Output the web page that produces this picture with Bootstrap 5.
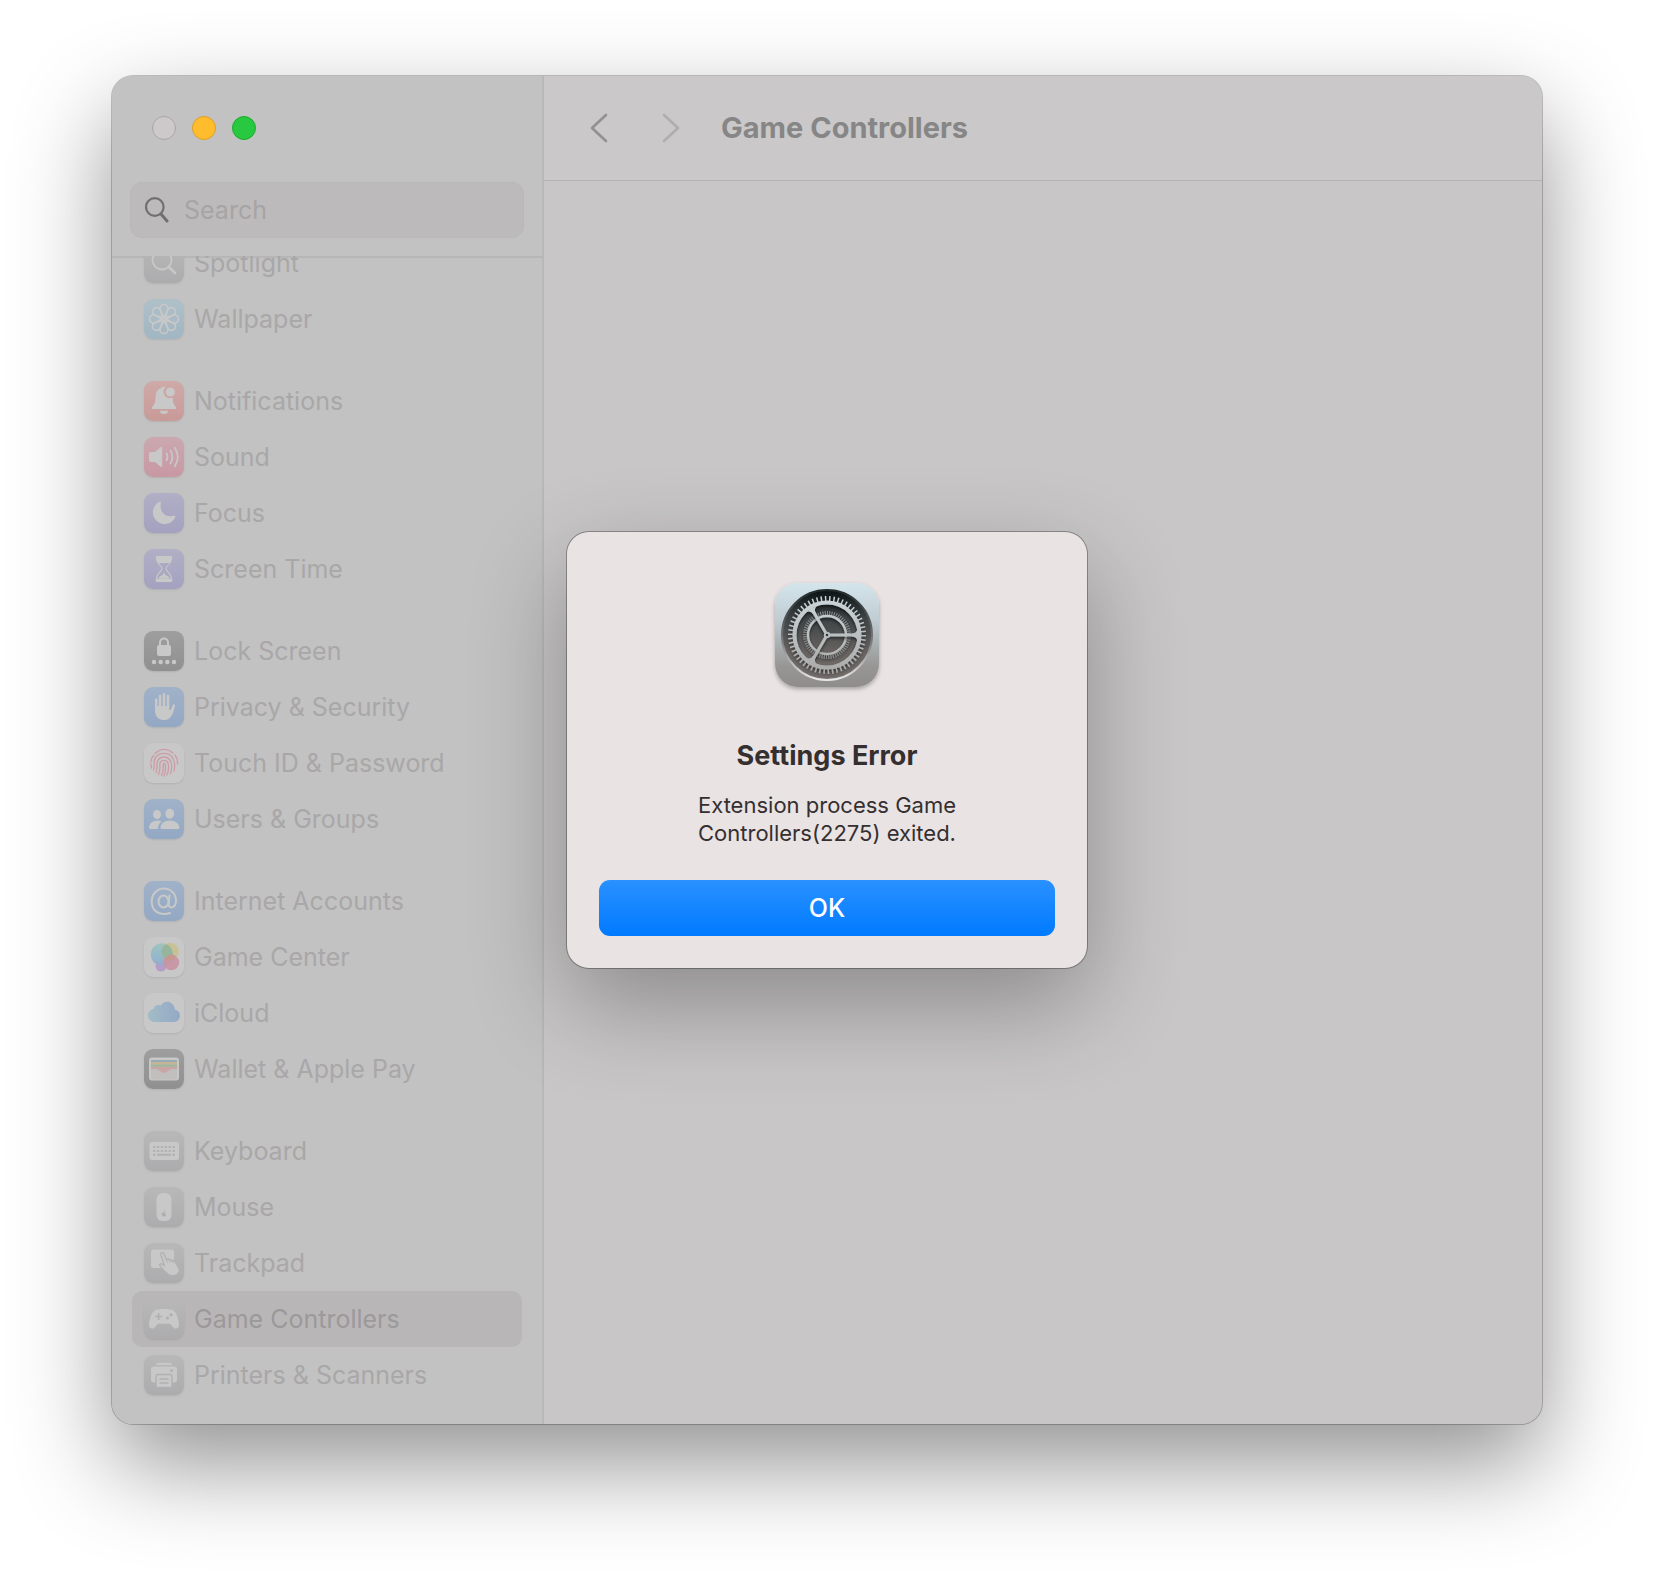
<!DOCTYPE html>
<html lang="en">
<head>
<meta charset="utf-8">
<meta name="viewport" content="width=device-width, initial-scale=1">
<title>Game Controllers</title>
<link href="https://cdn.jsdelivr.net/npm/bootstrap@5.3.0/dist/css/bootstrap.min.css" rel="stylesheet">
<style>
body { font-family: Inter, "Liberation Sans", sans-serif; background: #fff; padding: 76px 112px 148px; }
.app-window { border-radius: 21px; background: #c8c6c7; box-shadow: 0 0 0 1px rgba(0,0,0,.22), 0 40px 96px rgba(0,0,0,.43); }
.app-window > * { min-height: 0; }
.sidebar { width: 432px; background: #c2c2c2; border-right: 2px solid #b9b8b8; border-radius: 21px 0 0 21px; }
.lights { padding: 40px 40px 0; gap: 16px; height: 106px; }
.light { width: 24px; height: 24px; border-radius: 50%; border: 1px solid #aaa7a8; background: #cdc9ca; padding: 0; }
.light-min { background: #ffbd2e; border-color: #dfa023; }
.light-max { background: #28c940; border-color: #1aab2c; }
.search-box { margin: 0 18px 18px; height: 56px; border-radius: 12px; background: #bdbabb; border: 1px solid #b9b7b7; padding: 0 14px; gap: 15px; }
.search-box input { border: 0; background: none; outline: 0; font-size: 25px; line-height: 32px; color: #777; padding: 0; }
.search-box input::placeholder { color: #a6a4a5; opacity: 1; }
.nav-scroll { box-shadow: inset 0 2px #b7b6b6; padding: 0 20px 21px; }
.nav-scroll ul + ul { margin-top: 26px; }
.nav-row { height: 56px; padding: 0 12px; gap: 10px; border-radius: 10px; font-size: 25px; line-height: 32px; color: #a9a7a8; text-decoration: none; }
.nav-row.current { background: #b9b6b7; color: #9b999a; }
.tile { width: 40px; height: 40px; border-radius: 9px; flex: none; box-shadow: 0 1px 2px rgba(0,0,0,.09); color: #c8c8c8; }
.tile svg { display: block; }
.t-gray { background: linear-gradient(#b8b8b8, #acacae); }
.t-cyan { background: linear-gradient(#afc0c8, #a1b6c3); }
.t-red { background: linear-gradient(#cfaaa8, #c89a98); }
.t-pink { background: linear-gradient(#cba8af, #c898a3); }
.t-violet { background: linear-gradient(#b1afc5, #a3a1bf); }
.t-dark { background: linear-gradient(#9e9e9e, #909090); }
.t-blue { background: linear-gradient(#a0b2c8, #93a8c4); }
.t-white { background: #c8c8c8; }
.titlebar { height: 105px; background: #cac8c9; border-bottom: 1px solid #b4b2b3; border-radius: 0 21px 0 0; padding: 0 45px; }
.titlebar button { border: 0; background: none; padding: 0; display: block; }
.titlebar h1 { font-size: 29px; line-height: 36px; font-weight: 700; color: #868686; margin: 0 0 0 40px; }
.alert-box { width: 520px; border-radius: 22px; background: #e9e3e3; padding: 51px 32px 32px; box-shadow: 0 0 0 1px rgba(0,0,0,.3), 0 36px 96px rgba(0,0,0,.3); color: #352f30; }
.alert-box h2 { font-size: 27px; line-height: 32px; font-weight: 700; margin: 53px 0 19px; }
.alert-box p { font-size: 22px; line-height: 28px; margin: 0 50px 33px; }
.btn-ok { height: 56px; border: 0; border-radius: 11px; background: linear-gradient(#2a91ff, #007aff); color: #fff; font-size: 25px; line-height: 32px; font-weight: 500; padding: 0; }
</style>
<script src="https://cdn.jsdelivr.net/npm/bootstrap@5.3.0/dist/js/bootstrap.bundle.min.js"></script>
</head>
<body class="vh-100 d-flex">
<div class="app-window d-flex flex-grow-1 position-relative">
  <aside class="sidebar d-flex flex-column flex-shrink-0">
    <div class="lights d-flex flex-shrink-0">
      <button class="light" type="button" aria-label="Close"></button>
      <button class="light light-min" type="button" aria-label="Minimize"></button>
      <button class="light light-max" type="button" aria-label="Zoom"></button>
    </div>
    <label class="search-box d-flex align-items-center flex-shrink-0">
      <svg class="flex-shrink-0" width="24" height="26" viewBox="0 0 24 26" fill="none" stroke="#717071" stroke-linecap="round"><circle cx="9.800" cy="10" r="8.800" stroke-width="2.200"/><path d="M16 17l6 7" stroke-width="3"/></svg>
      <input class="flex-grow-1 w-100" type="search" placeholder="Search" aria-label="Search">
    </label>
    <nav class="nav-scroll flex-grow-1 d-flex flex-column justify-content-end overflow-hidden" aria-label="Settings">
      <ul class="list-unstyled mb-0">
        <li><a class="nav-row d-flex align-items-center" href="#"><span class="tile t-gray"><svg width="40" height="40" fill="none" stroke="currentColor" stroke-linecap="round"><circle cx="18" cy="17" r="9.500" stroke-width="1.800"/><path d="M25 24l6 6" stroke-width="2.600"/></svg></span>Spotlight</a></li>
        <li><a class="nav-row d-flex align-items-center" href="#"><span class="tile t-cyan"><svg width="40" height="40" fill="none" stroke="currentColor" stroke-width="1.600"><g id="petals"><path id="petal" d="M20 18C18 14 16 12 16 9.500a4 4 0 0 1 8 0C24 12 22 14 20 18z"/><use href="#petal" transform="rotate(45 20 20)"/><use href="#petal" transform="rotate(90 20 20)"/><use href="#petal" transform="rotate(135 20 20)"/></g><use href="#petals" transform="rotate(180 20 20)"/><circle cx="20" cy="20" r="1.800"/></svg></span>Wallpaper</a></li>
      </ul>
      <ul class="list-unstyled mb-0">
        <li><a class="nav-row d-flex align-items-center" href="#"><span class="tile t-red"><svg width="40" height="40" fill="currentColor"><path d="M21.500 6.200A6.300 6.300 0 0 0 26.500 17l2.200-.2c.2 4.700.8 6.500 3 9 .8 1.200.4 2.200-.9 2.200H9.200c-1.300 0-1.700-1-.9-2.200 2.700-3 3-5 3.300-10.300C12 10.500 14 7.800 17.300 7c.6-1 2.500-1.600 4.200-.8zM16 29.700h8a4 3.300 0 0 1-8 0z"/><circle cx="26.300" cy="11" r="4.500"/></svg></span>Notifications</a></li>
        <li><a class="nav-row d-flex align-items-center" href="#"><span class="tile t-pink"><svg width="40" height="40" fill="currentColor"><path d="M5 17c0-1.300.7-2 2-2h4l5.300-4.600c1-.8 1.900-.3 1.900.8v17.600c0 1.200-1 1.600-1.900.8L11 25H7c-1.300 0-2-.7-2-2z"/><path d="M22.500 16.500q2 3.500 0 7M26.500 13.500q3.800 6.500 0 13M30.800 10.800q6 9.200 0 18.400" fill="none" stroke="currentColor" stroke-width="1.700" stroke-linecap="round"/></svg></span>Sound</a></li>
        <li><a class="nav-row d-flex align-items-center" href="#"><span class="tile t-violet"><svg width="40" height="40" fill="currentColor"><path d="M16 8.500c.8-.3 1.200.1 1 .9C14.700 18.500 21 25 30 22.800c1.100-.3 1.700.2 1.300 1.100A11.700 11.700 0 1 1 16 8.500z"/></svg></span>Focus</a></li>
        <li><a class="nav-row d-flex align-items-center" href="#"><span class="tile t-violet"><svg width="40" height="40" fill="currentColor"><path fill-rule="evenodd" d="M13 7h14c1.500 0 1.500 1.500 1 3.500-.8 4.500-5.300 6.500-5.300 9s4.500 4.500 5.300 9.500c.5 2.500.5 4-1 4H13c-1.500 0-1.500-1.500-1-4 .8-5 5.300-7 5.300-9.500s-4.500-4.500-5.300-9C11.500 8.500 11.500 7 13 7zm2 7h10.500c-1.800 2.500-4 3.500-4 5.500 0 3.500 5.200 5 5.200 10.500H13.300c0-5.500 5.200-7 5.200-10.500 0-2-2-3-3.500-5.500z"/><path d="M20 23l1 2.500 4 2.500c1 1 .5 1.800-.5 1.800h-9c-1 0-1.500-.8-.5-1.800l4-2.500z"/></svg></span>Screen Time</a></li>
      </ul>
      <ul class="list-unstyled mb-0">
        <li><a class="nav-row d-flex align-items-center" href="#"><span class="tile t-dark"><svg width="40" height="40" fill="currentColor"><path d="M16 15v-3.500a4 4 0 0 1 8 0V15" fill="none" stroke="currentColor" stroke-width="2"/><rect x="13" y="14" width="14" height="11" rx="2"/><circle cx="10" cy="31" r="2.200"/><circle cx="16.700" cy="31" r="2.200"/><circle cx="23.300" cy="31" r="2.200"/><circle cx="30" cy="31" r="2.200"/></svg></span>Lock Screen</a></li>
        <li><a class="nav-row d-flex align-items-center" href="#"><span class="tile t-blue"><svg width="40" height="40"><path d="M12.200 12.500V23M16 9v11M20 7.200V20M24 9v12" fill="none" stroke="currentColor" stroke-width="2.500" stroke-linecap="round"/><path d="M11 19h14.200v4c1.300.3 2-.8 2.600-2.400l1-2.600c.6-1.400 2.600-.9 2.200.7-1.500 6-2.500 9.300-5 12-3.200 3.200-9.500 3-12.300.1C11.300 28.500 11 25 11 22z" fill="currentColor"/></svg></span>Privacy &amp; Security</a></li>
        <li><a class="nav-row d-flex align-items-center" href="#"><span class="tile t-white"><svg width="40" height="40" fill="none" stroke="#cd9da7" stroke-width="1.400" stroke-linecap="round"><path d="M11 10.500Q20 2.500 29 10M7 19Q7 15 9.500 12.500M31 12q3 4 2.500 9M6.700 21q1 1 .6 4M9.500 27c2-5-1-8 2-12.500 4-5.500 13-5.500 17 0 2.500 4 2.500 9 1.500 13.500M12 29.500c2.500-6-.5-9 2-12.500 3-4 9-4 12 0 2 3 2 9 .5 13.500M14.500 31.500c3-7 0-9.500 2-12.500 1.800-2.400 5.500-2 7 0 1.500 3 1 9-.5 13M17.500 32.500c2-4.500 2-7 1.700-10.500 0-2 2-2 2.100 0 .5 4 0 7.500-1.300 11"/></svg></span>Touch ID &amp; Password</a></li>
        <li><a class="nav-row d-flex align-items-center" href="#"><span class="tile t-blue"><svg width="40" height="40" fill="currentColor"><ellipse cx="13" cy="15.500" rx="4" ry="4.500"/><ellipse cx="25.800" cy="14.700" rx="4.400" ry="5"/><path d="M5 28.500c0-4 4-7 8.500-7 1.500 0 3 .3 4 .9-2.500 1.800-3.700 4-3.500 7.600H6.300C5.300 30 5 29.500 5 28.500zM16.500 28.500c0-4 4-7 9.300-7s9.500 3 9.500 7c0 1-.5 1.500-1.500 1.500H18c-1 0-1.500-.5-1.500-1.500z"/></svg></span>Users &amp; Groups</a></li>
      </ul>
      <ul class="list-unstyled mb-0">
        <li><a class="nav-row d-flex align-items-center" href="#"><span class="tile t-blue"><svg width="40" height="40" fill="none" stroke="currentColor" stroke-width="2" stroke-linecap="round"><ellipse cx="19.500" cy="20.500" rx="5" ry="6"/><path d="M25.500 14.500l-.8 9c-.3 4.500 7.300 4 7.300-4A12 12 0 0 0 20 7.500C13 7.500 7.700 13 7.700 20.500S12.500 33 20 33q3.500 0 6-1"/></svg></span>Internet Accounts</a></li>
        <li><a class="nav-row d-flex align-items-center" href="#"><span class="tile t-white"><svg width="40" height="40"><defs><linearGradient id="bubble" x1="0" y1="0" x2="0" y2="1"><stop stop-color="#9fc4bd"/><stop offset=".6" stop-color="#93b8cb"/><stop offset="1" stop-color="#9da8cb"/></linearGradient></defs><circle cx="17" cy="29" r="5.500" fill="#b49dc8"/><circle cx="18" cy="17.500" r="11.200" fill="url(#bubble)"/><circle cx="26" cy="14.500" r="8.800" fill="#c9c08d" opacity=".85"/><path d="M17.200 14.500a8.800 8.800 0 0 0 10 8.600 11.200 11.200 0 0 0-4.700-15.800 8.800 8.800 0 0 0-5.300 7.200z" fill="#96b59d"/><circle cx="27.300" cy="25.500" r="7.800" fill="#c994a3" opacity=".92"/><path d="M20 22.900a8 8 0 0 1 7.300-5.200q2.500 0 4.500 1.400a9 9 0 0 1-11.800 3.800z" fill="#c49a8a" opacity=".7"/></svg></span>Game Center</a></li>
        <li><a class="nav-row d-flex align-items-center" href="#"><span class="tile t-white"><svg width="40" height="40"><defs><linearGradient id="cloud"><stop stop-color="#a2bcc7"/><stop offset="1" stop-color="#94a8c5"/></linearGradient></defs><path d="M10.500 29C6.500 29 4 26 4 22.500s2.300-6 5.500-6.500c.8-3.500 4.200-5 7.200-3.500C20 6.500 29.500 7.500 31 16.500c3 .8 5 3.300 5 6.200 0 3.500-2.800 6.300-6.500 6.300z" fill="url(#cloud)"/></svg></span>iCloud</a></li>
        <li><a class="nav-row d-flex align-items-center" href="#"><span class="tile t-dark"><svg width="40" height="40"><rect x="5" y="8.500" width="30" height="23" rx="3" fill="#c8c8c8"/><path d="M7 11h26v2H7z" fill="#98abb5"/><path d="M7 13h26v2.700H7z" fill="#c5b596"/><path d="M7 15.500h26v2.300H7z" fill="#9eb79b"/><path d="M7 17.800h26v3.200H7z" fill="#c9a6a4"/><path d="M7 20h7c2 0 3 3.800 6 3.800s4-3.800 6-3.800h7v9.500c0 .5-.5 1-1 1H8c-.5 0-1-.5-1-1z" fill="#c1bfbd"/><path d="M12.500 20h15c-2.500 0-3.500 3.800-7.500 3.800S15 20 12.500 20z" fill="#c9a6a4"/></svg></span>Wallet &amp; Apple Pay</a></li>
      </ul>
      <ul class="list-unstyled mb-0">
        <li><a class="nav-row d-flex align-items-center" href="#"><span class="tile t-gray"><svg width="40" height="40"><rect x="5.500" y="11" width="29.500" height="18" rx="2.500" fill="currentColor"/><path d="M9 16h22.500M9 20h22.500" stroke="#b2b2b3" stroke-width="2.200" stroke-dasharray="2.400 1.500"/><path d="M9 23.800h2.400M13 23.800h14M28.500 23.800h2.400" stroke="#b0b0b1" stroke-width="2"/></svg></span>Keyboard</a></li>
        <li><a class="nav-row d-flex align-items-center" href="#"><span class="tile t-gray"><svg width="40" height="40"><rect x="12.500" y="6" width="15" height="28" rx="6" fill="currentColor"/><path d="M20 25.700c1-.7 2 0 2 0-1 1-.7 2 .2 2.600-.5 1.200-1.200 1.400-2.200 1-1.800.5-2.700-1.200-2.200-3 .6-.9 1.500-.9 2.200-.6zm0-.6c0-1 .7-1.700 1.400-1.800 0 1-.6 1.700-1.400 1.800z" fill="#aeaeb0"/></svg></span>Mouse</a></li>
        <li><a class="nav-row d-flex align-items-center" href="#"><span class="tile t-gray"><svg width="40" height="40"><rect x="7" y="6.500" width="23" height="18.500" rx="2.500" fill="currentColor"/><path d="M16.800 11.500c-.6-2 2.200-3 3-1l2.400 6c1.300-1 2.600-.5 3 .5 1.400-.8 2.700-.2 3 .8 1.400-.7 2.500-.1 3 1.300l3.500 6c2.300 4-2.200 8-6.700 7.500-4.500 0-6.500-4-12-9.700-1-1.300.4-2.700 2-1.900l2.300 1.500z" fill="currentColor" stroke="#b1b1b2" stroke-width="1.300"/><path d="M22.500 17l1 2.600M25.500 17.300l.9 2.200M28.500 18l.8 1.800" stroke="#b1b1b2"/></svg></span>Trackpad</a></li>
        <li><a class="nav-row current d-flex align-items-center" href="#" aria-current="page"><span class="tile t-gray"><svg width="40" height="40"><path d="M10.500 11.500c3-2 16-2 19 0C32.500 14 35 21 35 26c0 4-4 4.500-6 2l-3-3.300H14L11 28c-2 2.500-6 2-6-2 0-5 2.500-12 5.500-14.500z" fill="currentColor"/><path d="M14.700 14v7M11.200 17.500h7" stroke="#afafb0" stroke-width="1.600"/><circle cx="23.500" cy="19" r="1.600" fill="#afafb0"/><circle cx="27" cy="15.800" r="1.600" fill="#afafb0"/></svg></span>Game Controllers</a></li>
        <li><a class="nav-row d-flex align-items-center" href="#"><span class="tile t-gray"><svg width="40" height="40"><path d="M12 10c0-1.500 1-2.300 2.500-2.300h11c1.500 0 2.500.8 2.500 2.300zM10 11.500h20c2 0 3 1 3 3v10c0 2-1 3-3 3H10c-2 0-3-1-3-3v-10c0-2 1-3 3-3z" fill="currentColor"/><circle cx="27.500" cy="15.500" r="1.500" fill="#b2b2b3"/><rect x="12" y="19.500" width="16" height="13" rx="1.500" fill="currentColor" stroke="#b0b0b1" stroke-width="1.300"/><path d="M15.500 24h9M15.500 28h9" stroke="#b0b0b1" stroke-width="1.300"/></svg></span>Printers &amp; Scanners</a></li>
      </ul>
    </nav>
  </aside>
  <main class="flex-grow-1">
    <header class="titlebar d-flex align-items-center">
      <button type="button" aria-label="Back"><svg width="22" height="30" fill="none" stroke="#929192" stroke-width="2.600" stroke-linecap="round" stroke-linejoin="round"><path d="M17 2L3 15l14 13"/></svg></button>
      <button class="ms-5" type="button" aria-label="Forward" disabled><svg width="22" height="30" fill="none" stroke="#afadae" stroke-width="2.600" stroke-linecap="round" stroke-linejoin="round"><path d="M5 2l14 13L5 28"/></svg></button>
      <h1>Game Controllers</h1>
    </header>
  </main>
  <div class="position-absolute top-0 start-0 w-100 h-100 d-flex align-items-center justify-content-center">
    <section class="alert-box d-flex flex-column text-center" role="alertdialog" aria-labelledby="alert-title" aria-describedby="alert-text">
      <svg class="mx-auto" width="104" height="104" viewBox="0 0 104 104" fill="none" overflow="visible">
        <defs>
          <linearGradient id="plate" x1="0" y1="0" x2="0" y2="1"><stop stop-color="#d4e5ec"/><stop offset=".35" stop-color="#c0cdd3"/><stop offset=".8" stop-color="#979695"/><stop offset="1" stop-color="#8f8d8c"/></linearGradient>
          <linearGradient id="well" x1="0" y1="0" x2="0" y2="1"><stop stop-color="#0b1214"/><stop offset=".3" stop-color="#3c4244"/><stop offset=".7" stop-color="#686462"/><stop offset="1" stop-color="#777270"/></linearGradient>
          <linearGradient id="rim" x1="0" y1="0" x2="0" y2="1"><stop stop-color="#222a2c"/><stop offset=".55" stop-color="#777"/><stop offset="1" stop-color="#e8e8e8"/></linearGradient>
          <linearGradient id="metal" gradientUnits="userSpaceOnUse" x1="0" y1="14" x2="0" y2="90"><stop stop-color="#cbd6da"/><stop offset="1" stop-color="#aaa9a8"/></linearGradient>
          <filter id="drop" x="-20%" y="-20%" width="140%" height="140%"><feDropShadow dx="0" dy="2" stdDeviation="1.500" flood-opacity=".55"/></filter>
          <filter id="soft" x="-20%" y="-20%" width="140%" height="140%"><feDropShadow dx="0" dy="2" stdDeviation="2" flood-opacity=".3"/></filter>
        </defs>
        <rect width="104" height="104" rx="23" fill="url(#plate)" filter="url(#soft)"/>
        <circle cx="52" cy="52" r="45" fill="url(#well)" stroke="url(#rim)" stroke-width="2"/>
        <g filter="url(#drop)">
          <circle cx="52" cy="52" r="22" stroke="#8b8f90" stroke-width="4" pathLength="180" stroke-dasharray="1.300 1.700"/>
          <circle cx="52" cy="52" r="19" stroke="url(#metal)" stroke-width="2.400"/>
        </g>
        <g filter="url(#drop)">
          <circle cx="52" cy="52" r="36" stroke="url(#metal)" stroke-width="6" pathLength="162" stroke-dasharray="1 2"/>
          <circle cx="52" cy="52" r="32.500" stroke="url(#metal)" stroke-width="4"/>
          <path d="M52 52h31M52 52L36.500 25.200M52 52L36.500 78.800" stroke="url(#metal)" stroke-width="3"/>
          <path d="M77 50.500q5 0 6-6v15q-1-6-6-6zM38.300 31.500q-2.500-4.500-8.500-2l13-7.600q-4.600 3.700-2 8.200zM38.300 72.500q-2.500 4.500-8.500 2l13 7.600q-4.600-3.700-2-8.200z" fill="url(#metal)"/>
        </g>
        <circle cx="52" cy="52" r="3.200" fill="#b8bec0"/><circle cx="52" cy="52" r="1.200" fill="#333"/>
      </svg>
      <h2 id="alert-title">Settings Error</h2>
      <p id="alert-text">Extension process Game Controllers(2275) exited.</p>
      <button class="btn-ok w-100" type="button">OK</button>
    </section>
  </div>
</div>
</body>
</html>
